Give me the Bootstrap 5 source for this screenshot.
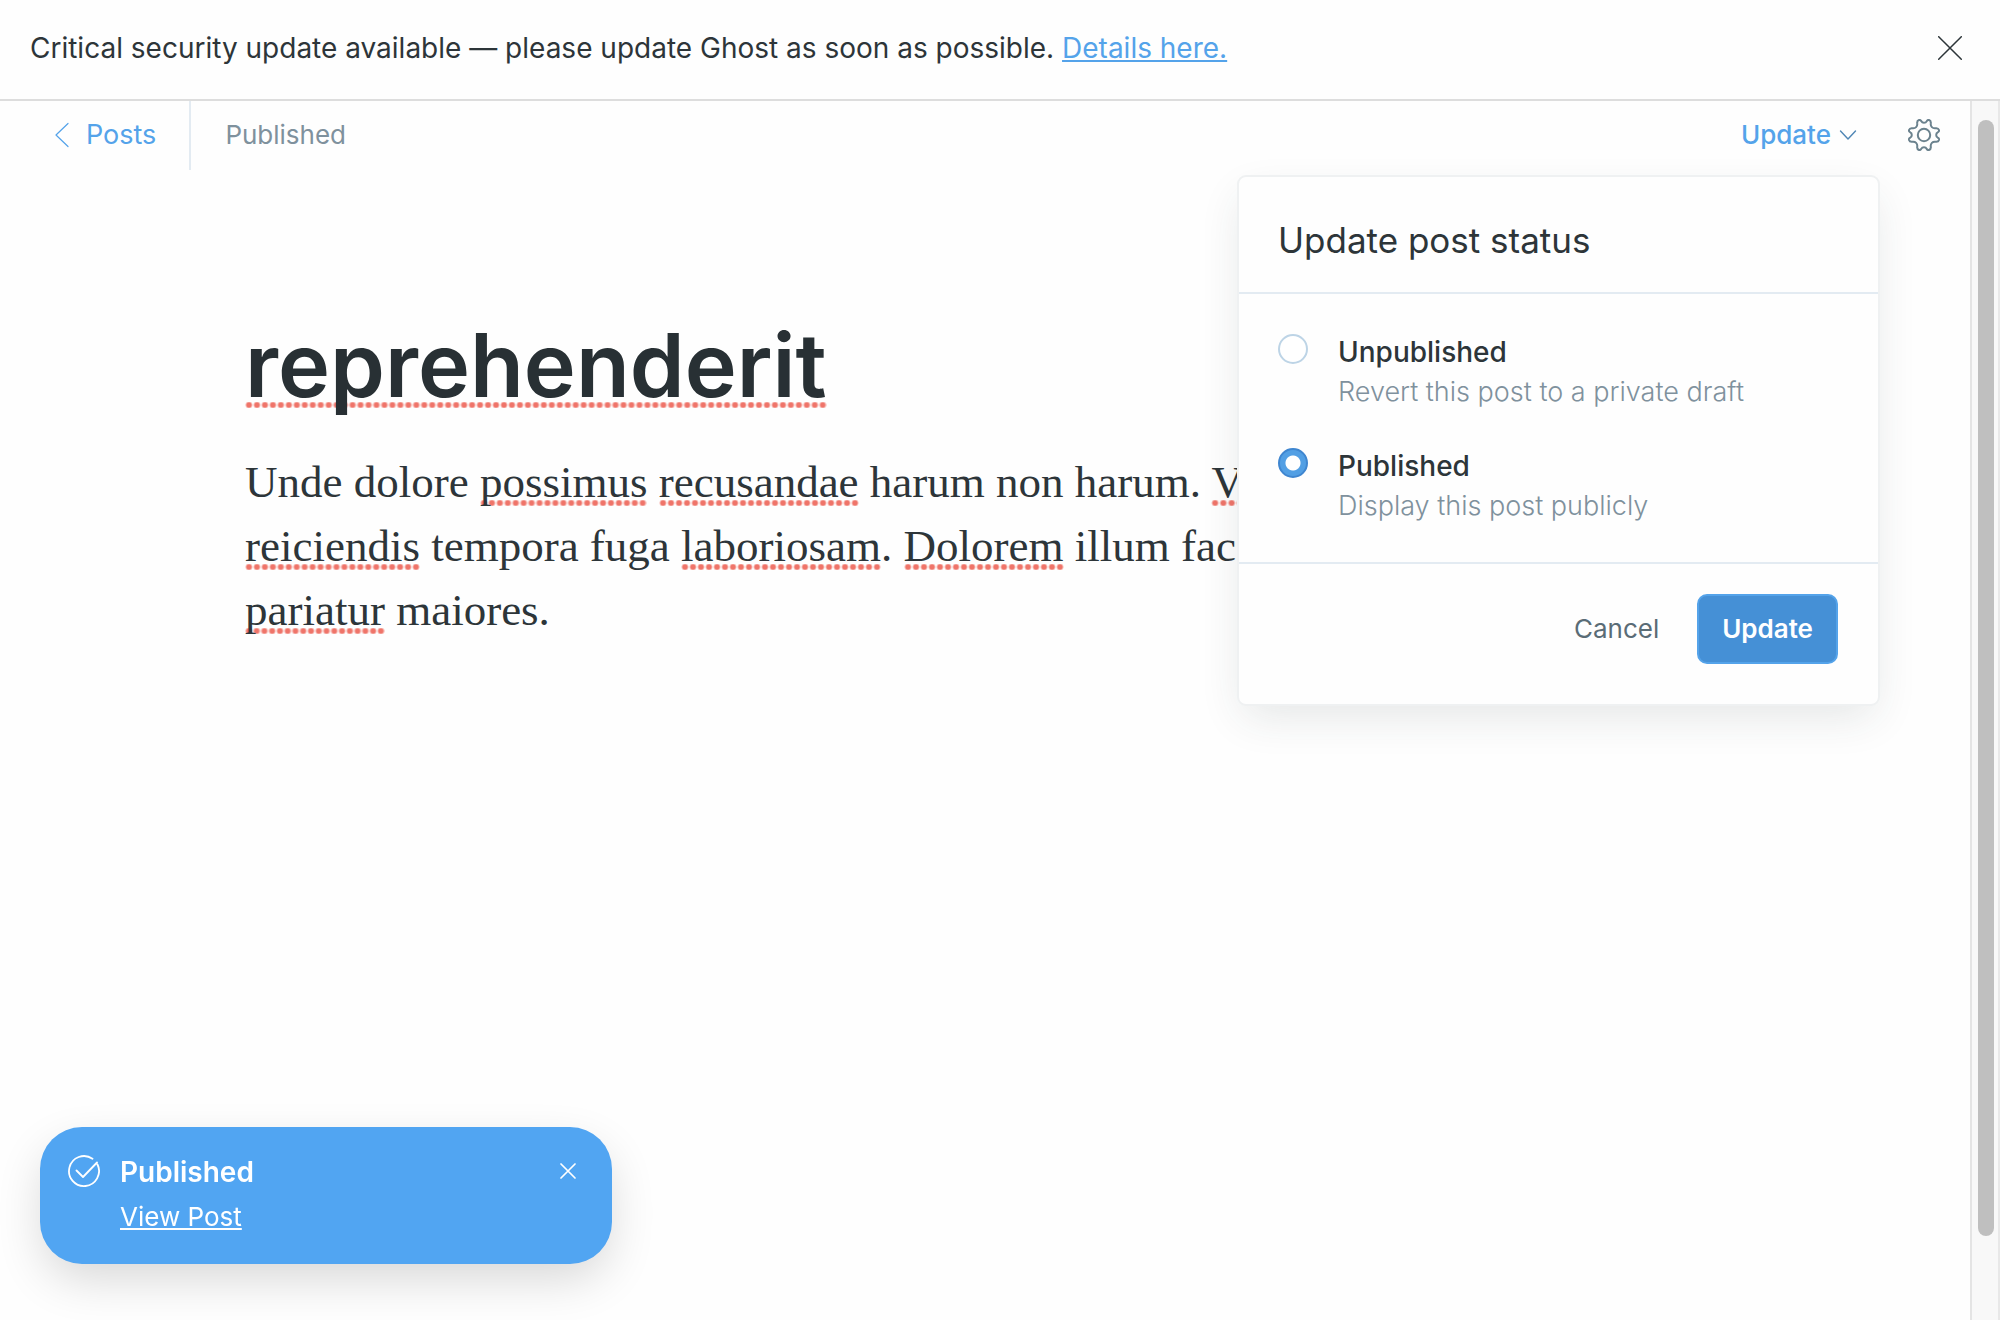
<!DOCTYPE html>
<html lang="en">
<head>
<meta charset="utf-8">
<meta name="viewport" content="width=device-width, initial-scale=1">
<title>Ghost editor</title>
<link rel="stylesheet" href="https://cdn.jsdelivr.net/npm/bootstrap@5.3.0/dist/css/bootstrap.min.css">
<style>
  :root { --ink: #2d3539; --blue: #54a3ea; --slate: #7f919d; --hairline: #e3ebf2; }
  body { font-family: Inter, "Liberation Sans", sans-serif; font-size: 26px; line-height: 32px; color: var(--ink); background: #fefefe; }
  svg { display: block; fill: none; stroke: currentColor; stroke-linecap: round; stroke-linejoin: round; }
  a { color: var(--blue); }
  .icon-btn { border: 0; background: none; padding: 0; color: inherit; }

  .notice-bar { min-height: 101px; padding: 0 38px 3px 30px; border-bottom: 2px solid #ddd; font-size: 28px; }

  .editor-head { height: 69px; padding: 0 30px 0 54px; }
  .editor-head > * { padding-bottom: 2px; }
  .back-link { gap: 16px; padding-right: 33px; border-right: 2px solid var(--hairline); text-decoration: none; font-size: 27px; }
  .post-state { padding-left: 34px; color: var(--slate); }
  .update-trigger { gap: 8px; color: var(--blue); font-weight: 500; }
  .update-trigger svg { color: #4f86b5; }
  .gear-btn { margin-left: 51px; color: #6b828e; }

  .status-menu { position: absolute; top: 74px; right: 90px; width: 643px; border: 2px solid #eff1f2; border-radius: 9px; background: #fefefe; box-shadow: 0 16px 44px -6px rgba(40, 60, 60, .12); z-index: 10; }
  .status-menu header { padding: 43px 39px 32px; border-bottom: 2px solid var(--hairline); }
  .status-menu h2 { font-size: 35px; line-height: 40px; font-weight: 400; }
  .status-options { padding: 38px 39px 36px; gap: 34px; }
  .status-option { gap: 30px; }
  .status-option input { appearance: none; flex: none; width: 30px; height: 30px; margin: 2px 0 0; border: 2px solid #bdd4e6; border-radius: 50%; background: #fff; }
  .status-option input:checked { border-color: #3f86d0; background: radial-gradient(circle, #fff 7px, #529fe4 8px); }
  .option-name { font-size: 28px; font-weight: 500; line-height: 40px; }
  .option-hint { font-size: 27px; font-weight: 300; line-height: 40px; color: var(--slate); }
  .status-menu footer { padding: 30px 40px 40px; gap: 38px; border-top: 2px solid var(--hairline); }
  .cancel-btn { color: #5a6c76; }
  .confirm-btn { height: 70px; padding: 0 23px; border: 2px solid #54a3ea; border-radius: 10px; background: #4590d6; color: #fff; font-weight: 600; }

  .post-canvas { max-width: 1480px; padding-top: 137px; }
  .post-canvas h1 { font-size: 88px; line-height: 116px; font-weight: 600; color: #283034; margin-bottom: 27px; }
  .post-copy { font-family: "Liberation Serif", serif; font-size: 45px; line-height: 64px; }
  .typo { background: radial-gradient(circle, #ef7469 2px, transparent 4px) left bottom 1px / 8px 6px round no-repeat; }
  h1 .typo { background-position: left bottom 10px; }

  .scroll-rail { width: 30px; padding: 19px 0 0 2px; border-left: 2px solid #e4e4e4; border-right: 2px solid #e8e8e8; background: #f8f8f8; }
  .scroll-rail span { width: 16px; height: 93%; border-radius: 8px; background: #bfbfbf; }

  .publish-toast { position: fixed; left: 40px; bottom: 56px; width: 572px; padding: 26px 36px 29px 28px; border-radius: 42px; background: #51a5f2; color: #fff; gap: 20px; box-shadow: 0 18px 48px -4px rgba(0, 0, 0, .16); z-index: 20; }
  .publish-toast strong { font-size: 28px; font-weight: 600; line-height: 38px; }
  .publish-toast a { color: #fff; }
  .publish-toast .view-row { margin-top: 8px; line-height: 36px; }
  .publish-toast .icon-btn { margin-top: 10px; }
</style>
<script src="https://cdn.jsdelivr.net/npm/bootstrap@5.3.0/dist/js/bootstrap.bundle.min.js"></script>
</head>
<body>
<div class="d-flex flex-column vh-100 overflow-hidden">

  <div class="notice-bar d-flex align-items-center justify-content-between" role="status">
    <div>Critical security update available — please update Ghost as soon as possible. <a href="#">Details here.</a></div>
    <button type="button" class="icon-btn" aria-label="Dismiss">
      <svg width="24" height="24" viewBox="0 0 24 24" stroke-width="1.5"><path d="M.7.7l22.6 22.6M23.3.7L.7 23.3"/></svg>
    </button>
  </div>

  <div class="d-flex flex-grow-1 overflow-hidden">
    <div class="flex-grow-1 position-relative">
      <div class="editor-head d-flex">
        <a href="#" class="back-link d-flex align-items-center">
          <svg width="16" height="26" viewBox="0 0 16 26" stroke-width="1.2"><path d="M14 1.5L2 13l12 11.500"/></svg>
          Posts
        </a>
        <div class="post-state d-flex align-items-center">Published</div>
        <div class="ms-auto d-flex align-items-center">
          <button type="button" class="icon-btn update-trigger d-flex align-items-center" aria-expanded="true">
            Update
            <svg width="18" height="12" viewBox="0 0 18 12" stroke-width="1.4"><path d="M1.500 2L9 10l7.500-8"/></svg>
          </button>
          <button type="button" class="icon-btn gear-btn" aria-label="Settings">
            <svg width="32" height="32" viewBox="0 0 32 32" stroke-width="2">
              <circle cx="16" cy="16" r="6.200"/>
              <path d="M9.200 4.200Q8.900 1.700 11 1Q12.600.6 13.400 2.300C14.300 4.300 17.700 4.300 18.600 2.300Q19.400.6 21 1Q23.100 1.700 22.800 4.200C22.300 7.500 24.500 9.700 27.800 9.200Q30.300 8.900 31 11Q31.400 12.600 29.700 13.400C27.700 14.300 27.700 17.700 29.700 18.600Q31.400 19.400 31 21Q30.300 23.100 27.800 22.800C24.500 22.300 22.300 24.500 22.800 27.800Q23.100 30.300 21 31Q19.400 31.400 18.600 29.700C17.700 27.700 14.300 27.700 13.400 29.700Q12.600 31.400 11 31Q8.900 30.300 9.200 27.800C9.700 24.500 7.500 22.300 4.200 22.800Q1.700 23.100 1 21Q.6 19.400 2.300 18.600C4.300 17.700 4.300 14.300 2.300 13.400Q.6 12.600 1 11Q1.700 8.900 4.200 9.200C7.500 9.700 9.700 7.500 9.200 4.200Z"/>
            </svg>
          </button>
        </div>
      </div>

      <form class="status-menu">
        <header><h2 class="m-0">Update post status</h2></header>
        <div class="status-options d-flex flex-column">
          <label class="status-option d-flex">
            <input type="radio" name="status">
            <span><span class="option-name d-block">Unpublished</span><span class="option-hint d-block">Revert this post to a private draft</span></span>
          </label>
          <label class="status-option d-flex">
            <input type="radio" name="status" checked>
            <span><span class="option-name d-block">Published</span><span class="option-hint d-block">Display this post publicly</span></span>
          </label>
        </div>
        <footer class="d-flex justify-content-end align-items-center">
          <button type="button" class="icon-btn cancel-btn">Cancel</button>
          <button type="button" class="confirm-btn">Update</button>
        </footer>
      </form>

      <main class="post-canvas mx-auto">
        <h1><span class="typo">reprehenderit</span></h1>
        <p class="post-copy">Unde dolore <span class="typo">possimus</span> <span class="typo">recusandae</span> harum non harum. <span class="typo">V</span><br>
          <span class="typo">reiciendis</span> tempora fuga <span class="typo">laboriosam</span>. <span class="typo">Dolorem</span> illum face<br>
          <span class="typo">pariatur</span> maiores.</p>
      </main>
    </div>
    <div class="scroll-rail d-flex justify-content-center" aria-hidden="true"><span></span></div>
  </div>
</div>

<div class="publish-toast d-flex align-items-start" role="alert">
  <svg width="32" height="38" viewBox="0 0 32 38" stroke-width="1.800"><path d="M24.500 5.700A15 15 0 1 0 29.500 11.500M8.500 17.500l6.500 6.500L29 9.500"/></svg>
  <div class="flex-grow-1">
    <strong class="d-block">Published</strong>
    <div class="view-row"><a href="#">View Post</a></div>
  </div>
  <button type="button" class="icon-btn" aria-label="Close">
    <svg width="16" height="16" viewBox="0 0 16 16" stroke-width="1.700"><path d="M1 1l14 14M15 1L1 15"/></svg>
  </button>
</div>
</body>
</html>
